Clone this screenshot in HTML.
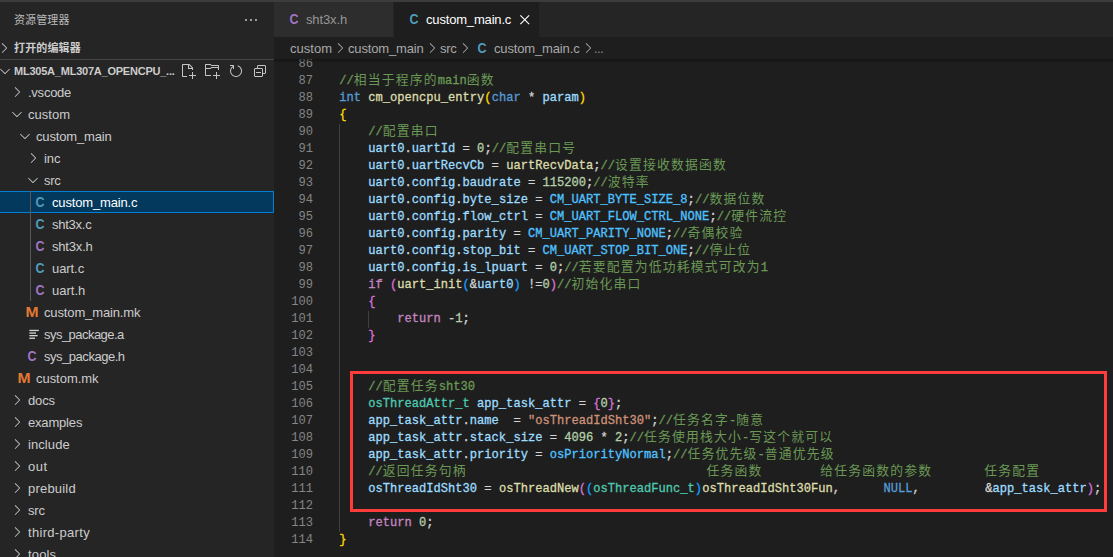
<!DOCTYPE html>
<html lang="zh-CN"><head><meta charset="utf-8"><title>custom_main.c</title>
<style>
html,body{margin:0;padding:0;background:#1e1e1e;overflow:hidden}
body{width:1113px;height:557px;position:relative;font-family:"Liberation Sans","Noto Sans CJK SC",sans-serif;font-size:13px;color:#cccccc}
#topstrip{position:absolute;left:0;top:0;width:1113px;height:2px;background:#3c3c3c}
#side{position:absolute;left:0;top:0;width:274px;height:557px;background:#252526;overflow:hidden}
.t{position:absolute;white-space:nowrap;height:22px;line-height:22px}
.ttl{font-size:11px;height:22px;color:#bbbbbb}
.hdr{font-size:11px;font-weight:bold;color:#cccccc}
.ic{position:absolute;display:block}
#sep{position:absolute;left:0;top:59px;width:274px;height:1px;background:#464647}
#sel{position:absolute;left:-1px;top:191px;width:275px;height:22px;background:#04395e;box-sizing:border-box;border:1px solid #007fd4}
#guide{position:absolute;left:30px;top:191px;width:1px;height:110px;background:#585858}
.fi{position:absolute;width:16px;height:22px;line-height:22px;text-align:center;font-weight:bold;white-space:nowrap}
.fc{font-size:14.5px;transform:scaleX(.86)}
.fm{font-size:14px;width:22px;transform:scaleX(1.12)}
#tabs{position:absolute;left:274px;top:2px;width:839px;height:35px;background:#252526}
#tab1{position:absolute;left:274px;top:2px;width:119px;height:35px;background:#2d2d2d}
#tab2{position:absolute;left:394px;top:2px;width:145px;height:35px;background:#1e1e1e}
#ed{position:absolute;left:274px;top:59px;width:839px;height:498px;overflow:hidden;background:#1e1e1e}
#ed > *{margin-left:-274px;margin-top:-59px}
.ln{position:absolute;left:273px;width:40px;text-align:right;color:#858585;height:17px;line-height:17px;font-family:"Liberation Mono",monospace;font-size:12.1px;letter-spacing:0.0px;white-space:pre}
.cl{position:absolute;left:339.2px;height:17px;line-height:17px;font-family:"Liberation Mono","Noto Sans CJK SC",monospace;font-size:12.1px;letter-spacing:0.0px;white-space:pre;color:#d4d4d4;-webkit-text-stroke:.3px}
.z{font-family:"Noto Sans CJK SC",sans-serif;font-size:12.8px;letter-spacing:1.1999999999999993px;line-height:1px;-webkit-text-stroke:0}
#ig1{position:absolute;left:339px;top:124px;width:1px;height:408px;background:#404040}
#ig2{position:absolute;left:368px;top:311px;width:1px;height:17px;background:#404040}
#red{position:absolute;left:350px;top:371px;width:757px;height:141px;box-sizing:border-box;border:3px solid #ff3b3b}
#shadow{position:absolute;left:274px;top:59px;width:839px;height:4px;background:linear-gradient(rgba(0,0,0,.34),rgba(0,0,0,0))}
</style></head>
<body>
<div id="side">
<div id="t_title" class="t ttl" style="left:14px;top:9px;letter-spacing:0.100px;">资源管理器</div>
<svg class="ic" style="left:243px;top:11.5px" width="16" height="16" viewBox="0 0 16 16" fill="#c5c5c5"><path d="M4 8a1 1 0 1 1-2 0 1 1 0 0 1 2 0zm5 0a1 1 0 1 1-2 0 1 1 0 0 1 2 0zm5 0a1 1 0 1 1-2 0 1 1 0 0 1 2 0z"/></svg>
<svg class="ic" style="left:-4px;top:40px" width="16" height="16" viewBox="0 0 16 16" fill="#c5c5c5"><path fill-rule="evenodd" clip-rule="evenodd" d="M10.072 8.024L5.715 3.667l.618-.62L11 7.716v.618L6.333 13l-.618-.619 4.357-4.357z"/></svg>
<div id="t_open" class="t hdr" style="left:14px;top:37px;letter-spacing:0.131px;">打开的编辑器</div>
<div id="sep"></div>
<svg class="ic" style="left:-3.5px;top:62.5px" width="16" height="16" viewBox="0 0 16 16" fill="#c5c5c5"><path fill-rule="evenodd" clip-rule="evenodd" d="M7.976 10.072l4.357-4.357.62.618L8.284 11h-.618L3 6.333l.619-.618 4.357 4.357z"/></svg>
<div id="t_proj" class="t hdr" style="left:14px;top:60px;letter-spacing:-0.227px;">ML305A_ML307A_OPENCPU_...</div>
<svg class="ic" style="left:180px;top:63px" width="16" height="16" viewBox="0 0 16 16" fill="#c5c5c5"><path fill-rule="evenodd" clip-rule="evenodd" d="M9.5 1.1l3.4 3.5.1.4v2h-1V6H8V2H3v11h4v1H2.5l-.5-.5v-12l.5-.5h6.7l.3.1zM9 2v3h2.9L9 2zm4 14h-1v-3H9v-1h3V9h1v3h3v1h-3v3z"/></svg>
<svg class="ic" style="left:204px;top:63px" width="16" height="16" viewBox="0 0 16 16" fill="#c5c5c5"><path fill-rule="evenodd" clip-rule="evenodd" d="M14.5 2H7.71l-.85-.85L6.51 1h-5l-.5.5v11l.5.5H7v-1H1.99V6h4.49l.35-.15.86-.86H14v1.5l-.001.51h1.011V2.5L14.5 2zm-.51 2h-6.5l-.35.15-.86.86H2v-3h4.29l.85.85.36.15H14l-.01.99zM13 16h-1v-3H9v-1h3V9h1v3h3v1h-3v3z"/></svg>
<svg class="ic" style="left:228px;top:63px" width="16" height="16" viewBox="0 0 16 16" fill="#c5c5c5"><path fill-rule="evenodd" clip-rule="evenodd" d="M4.681 3H2V2h3.5l.5.5V6H5V4a5 5 0 1 0 4.53-.761l.302-.954A6 6 0 1 1 4.681 3z"/></svg>
<svg class="ic" style="left:252px;top:63px" width="16" height="16" viewBox="0 0 16 16" fill="#c5c5c5"><path d="M9 9H4v1h5V9z"/><path fill-rule="evenodd" clip-rule="evenodd" d="M5 3l1-1h7l1 1v7l-1 1h-2v2l-1 1H3l-1-1V6l1-1h2V3zm1 2h4l1 1v4h2V3H6v2zm4 1H3v7h7V6z"/></svg>
<div id="sel"></div>
<div id="guide"></div>
<svg class="ic" style="left:9px;top:84px" width="16" height="16" viewBox="0 0 16 16" fill="#c5c5c5"><path fill-rule="evenodd" clip-rule="evenodd" d="M10.072 8.024L5.715 3.667l.618-.62L11 7.716v.618L6.333 13l-.618-.619 4.357-4.357z"/></svg>
<div id="r0" class="t row" style="left:28px;top:82px;letter-spacing:-0.244px;">.vscode</div>
<svg class="ic" style="left:9px;top:106px" width="16" height="16" viewBox="0 0 16 16" fill="#c5c5c5"><path fill-rule="evenodd" clip-rule="evenodd" d="M7.976 10.072l4.357-4.357.62.618L8.284 11h-.618L3 6.333l.619-.618 4.357 4.357z"/></svg>
<div id="r1" class="t row" style="left:28px;top:104px;letter-spacing:0.033px;">custom</div>
<svg class="ic" style="left:17px;top:128px" width="16" height="16" viewBox="0 0 16 16" fill="#c5c5c5"><path fill-rule="evenodd" clip-rule="evenodd" d="M7.976 10.072l4.357-4.357.62.618L8.284 11h-.618L3 6.333l.619-.618 4.357 4.357z"/></svg>
<div id="r2" class="t row" style="left:36px;top:126px;letter-spacing:-0.165px;">custom_main</div>
<svg class="ic" style="left:25px;top:150px" width="16" height="16" viewBox="0 0 16 16" fill="#c5c5c5"><path fill-rule="evenodd" clip-rule="evenodd" d="M10.072 8.024L5.715 3.667l.618-.62L11 7.716v.618L6.333 13l-.618-.619 4.357-4.357z"/></svg>
<div id="r3" class="t row" style="left:44px;top:148px;letter-spacing:-0.042px;">inc</div>
<svg class="ic" style="left:25px;top:172px" width="16" height="16" viewBox="0 0 16 16" fill="#c5c5c5"><path fill-rule="evenodd" clip-rule="evenodd" d="M7.976 10.072l4.357-4.357.62.618L8.284 11h-.618L3 6.333l.619-.618 4.357 4.357z"/></svg>
<div id="r4" class="t row" style="left:44px;top:170px;letter-spacing:-0.281px;">src</div>
<div class="fi fc" style="left:32px;top:191px;color:#519aba">C</div>
<div id="r5" class="t row" style="left:52px;top:192px;letter-spacing:-0.156px;color:#ffffff;">custom_main.c</div>
<div class="fi fc" style="left:32px;top:213px;color:#519aba">C</div>
<div id="r6" class="t row" style="left:52px;top:214px;letter-spacing:-0.256px;">sht3x.c</div>
<div class="fi fc" style="left:32px;top:235px;color:#a074c4">C</div>
<div id="r7" class="t row" style="left:52px;top:236px;letter-spacing:-0.188px;">sht3x.h</div>
<div class="fi fc" style="left:32px;top:257px;color:#519aba">C</div>
<div id="r8" class="t row" style="left:52px;top:258px;letter-spacing:-0.071px;">uart.c</div>
<div class="fi fc" style="left:32px;top:279px;color:#a074c4">C</div>
<div id="r9" class="t row" style="left:52px;top:280px;letter-spacing:0.009px;">uart.h</div>
<div class="fi fm" style="left:21px;top:301px;color:#e37933">M</div>
<div id="r10" class="t row" style="left:44px;top:302px;letter-spacing:-0.132px;">custom_main.mk</div>
<svg class="ic" style="left:27px;top:325px" width="16" height="16" viewBox="0 0 16 16" fill="#d4d7d6"><rect x="2.4" y="4.8" width="9.4" height="1.3"/><rect x="2.4" y="7.4" width="6.6" height="1.3"/><rect x="2.4" y="10.0" width="8.2" height="1.3"/><rect x="2.4" y="12.6" width="5.6" height="1.3"/></svg>
<div id="r11" class="t row" style="left:44px;top:324px;letter-spacing:-0.533px;">sys_package.a</div>
<div class="fi fc" style="left:24px;top:345px;color:#a074c4">C</div>
<div id="r12" class="t row" style="left:44px;top:346px;letter-spacing:-0.472px;">sys_package.h</div>
<div class="fi fm" style="left:13px;top:367px;color:#e37933">M</div>
<div id="r13" class="t row" style="left:36px;top:368px;letter-spacing:-0.038px;">custom.mk</div>
<svg class="ic" style="left:9px;top:392px" width="16" height="16" viewBox="0 0 16 16" fill="#c5c5c5"><path fill-rule="evenodd" clip-rule="evenodd" d="M10.072 8.024L5.715 3.667l.618-.62L11 7.716v.618L6.333 13l-.618-.619 4.357-4.357z"/></svg>
<div id="r14" class="t row" style="left:28px;top:390px;letter-spacing:-0.117px;">docs</div>
<svg class="ic" style="left:9px;top:414px" width="16" height="16" viewBox="0 0 16 16" fill="#c5c5c5"><path fill-rule="evenodd" clip-rule="evenodd" d="M10.072 8.024L5.715 3.667l.618-.62L11 7.716v.618L6.333 13l-.618-.619 4.357-4.357z"/></svg>
<div id="r15" class="t row" style="left:28px;top:412px;letter-spacing:-0.180px;">examples</div>
<svg class="ic" style="left:9px;top:436px" width="16" height="16" viewBox="0 0 16 16" fill="#c5c5c5"><path fill-rule="evenodd" clip-rule="evenodd" d="M10.072 8.024L5.715 3.667l.618-.62L11 7.716v.618L6.333 13l-.618-.619 4.357-4.357z"/></svg>
<div id="r16" class="t row" style="left:28px;top:434px;letter-spacing:0.085px;">include</div>
<svg class="ic" style="left:9px;top:458px" width="16" height="16" viewBox="0 0 16 16" fill="#c5c5c5"><path fill-rule="evenodd" clip-rule="evenodd" d="M10.072 8.024L5.715 3.667l.618-.62L11 7.716v.618L6.333 13l-.618-.619 4.357-4.357z"/></svg>
<div id="r17" class="t row" style="left:28px;top:456px;letter-spacing:0.540px;">out</div>
<svg class="ic" style="left:9px;top:480px" width="16" height="16" viewBox="0 0 16 16" fill="#c5c5c5"><path fill-rule="evenodd" clip-rule="evenodd" d="M10.072 8.024L5.715 3.667l.618-.62L11 7.716v.618L6.333 13l-.618-.619 4.357-4.357z"/></svg>
<div id="r18" class="t row" style="left:28px;top:478px;letter-spacing:0.205px;">prebuild</div>
<svg class="ic" style="left:9px;top:502px" width="16" height="16" viewBox="0 0 16 16" fill="#c5c5c5"><path fill-rule="evenodd" clip-rule="evenodd" d="M10.072 8.024L5.715 3.667l.618-.62L11 7.716v.618L6.333 13l-.618-.619 4.357-4.357z"/></svg>
<div id="r19" class="t row" style="left:28px;top:500px;letter-spacing:-0.211px;">src</div>
<svg class="ic" style="left:9px;top:524px" width="16" height="16" viewBox="0 0 16 16" fill="#c5c5c5"><path fill-rule="evenodd" clip-rule="evenodd" d="M10.072 8.024L5.715 3.667l.618-.62L11 7.716v.618L6.333 13l-.618-.619 4.357-4.357z"/></svg>
<div id="r20" class="t row" style="left:28px;top:522px;letter-spacing:0.316px;">third-party</div>
<svg class="ic" style="left:9px;top:546px" width="16" height="16" viewBox="0 0 16 16" fill="#c5c5c5"><path fill-rule="evenodd" clip-rule="evenodd" d="M10.072 8.024L5.715 3.667l.618-.62L11 7.716v.618L6.333 13l-.618-.619 4.357-4.357z"/></svg>
<div id="r21" class="t row" style="left:28px;top:544px;letter-spacing:0.145px;">tools</div>
</div>
<div id="tabs"></div>
<div id="tab1"></div><div id="tab2"></div>
<div class="fi fc" style="left:286px;top:8px;color:#a074c4">C</div>
<div id="t_tab1" class="t row" style="left:306px;top:9px;letter-spacing:-0.132px;color:#969696;">sht3x.h</div>
<div class="fi fc" style="left:406px;top:8px;color:#519aba">C</div>
<div id="t_tab2" class="t row" style="left:426px;top:9px;letter-spacing:-0.171px;color:#ffffff;">custom_main.c</div>
<svg class="ic" style="left:516.2px;top:11px" width="17.5" height="17.5" viewBox="0 0 16 16" fill="#ffffff"><path fill-rule="evenodd" clip-rule="evenodd" d="M8 8.707l3.646 3.647.708-.707L8.707 8l3.647-3.646-.707-.708L8 7.293 4.354 3.646l-.707.708L7.293 8l-3.647 3.646.708.708L8 8.707z"/></svg>
<div id="b1" class="t row" style="left:290px;top:38px;letter-spacing:0.033px;color:#a9a9a9;">custom</div>
<svg class="ic" style="left:332px;top:40px" width="16" height="16" viewBox="0 0 16 16" fill="#a9a9a9"><path fill-rule="evenodd" clip-rule="evenodd" d="M10.072 8.024L5.715 3.667l.618-.62L11 7.716v.618L6.333 13l-.618-.619 4.357-4.357z"/></svg>
<div id="b2" class="t row" style="left:348px;top:38px;letter-spacing:-0.147px;color:#a9a9a9;">custom_main</div>
<svg class="ic" style="left:424px;top:40px" width="16" height="16" viewBox="0 0 16 16" fill="#a9a9a9"><path fill-rule="evenodd" clip-rule="evenodd" d="M10.072 8.024L5.715 3.667l.618-.62L11 7.716v.618L6.333 13l-.618-.619 4.357-4.357z"/></svg>
<div id="b3" class="t row" style="left:440px;top:38px;letter-spacing:-0.312px;color:#a9a9a9;">src</div>
<svg class="ic" style="left:456.5px;top:40px" width="16" height="16" viewBox="0 0 16 16" fill="#a9a9a9"><path fill-rule="evenodd" clip-rule="evenodd" d="M10.072 8.024L5.715 3.667l.618-.62L11 7.716v.618L6.333 13l-.618-.619 4.357-4.357z"/></svg>
<div class="fi fc" style="left:474px;top:37px;color:#519aba">C</div>
<div id="b4" class="t row" style="left:494px;top:38px;letter-spacing:-0.148px;color:#a9a9a9;">custom_main.c</div>
<svg class="ic" style="left:579.5px;top:40px" width="16" height="16" viewBox="0 0 16 16" fill="#a9a9a9"><path fill-rule="evenodd" clip-rule="evenodd" d="M10.072 8.024L5.715 3.667l.618-.62L11 7.716v.618L6.333 13l-.618-.619 4.357-4.357z"/></svg>
<div id="b5" class="t row" style="left:594.2px;top:38px;color:#a9a9a9;transform:scaleX(.74);transform-origin:0 50%;">…</div>
<div id="ed">
<div id="ig1"></div><div id="ig2"></div>
<div class="ln" style="top:56px">86</div>
<div id="L86" class="cl" style="top:56px"></div>
<div class="ln" style="top:73px">87</div>
<div id="L87" class="cl" style="top:73px"><span style="color:#6a9955">//<span class="z">相当于程序的</span>main<span class="z">函数</span></span></div>
<div class="ln" style="top:90px">88</div>
<div id="L88" class="cl" style="top:90px"><span style="color:#569cd6">int</span><span style="color:#d4d4d4"> </span><span style="color:#dcdcaa">cm_opencpu_entry</span><span style="color:#ffd700">(</span><span style="color:#569cd6">char</span><span style="color:#d4d4d4"> * </span><span style="color:#9cdcfe">param</span><span style="color:#ffd700">)</span></div>
<div class="ln" style="top:107px">89</div>
<div id="L89" class="cl" style="top:107px"><span style="color:#ffd700">{</span></div>
<div class="ln" style="top:124px">90</div>
<div id="L90" class="cl" style="top:124px"><span style="color:#d4d4d4">    </span><span style="color:#6a9955">//<span class="z">配置串口</span></span></div>
<div class="ln" style="top:141px">91</div>
<div id="L91" class="cl" style="top:141px"><span style="color:#d4d4d4">    </span><span style="color:#9cdcfe">uart0</span><span style="color:#d4d4d4">.</span><span style="color:#9cdcfe">uartId</span><span style="color:#d4d4d4"> = </span><span style="color:#b5cea8">0</span><span style="color:#d4d4d4">;</span><span style="color:#6a9955">//<span class="z">配置串口号</span></span></div>
<div class="ln" style="top:158px">92</div>
<div id="L92" class="cl" style="top:158px"><span style="color:#d4d4d4">    </span><span style="color:#9cdcfe">uart0</span><span style="color:#d4d4d4">.</span><span style="color:#9cdcfe">uartRecvCb</span><span style="color:#d4d4d4"> = </span><span style="color:#dcdcaa">uartRecvData</span><span style="color:#d4d4d4">;</span><span style="color:#6a9955">//<span class="z">设置接收数据函数</span></span></div>
<div class="ln" style="top:175px">93</div>
<div id="L93" class="cl" style="top:175px"><span style="color:#d4d4d4">    </span><span style="color:#9cdcfe">uart0</span><span style="color:#d4d4d4">.</span><span style="color:#9cdcfe">config</span><span style="color:#d4d4d4">.</span><span style="color:#9cdcfe">baudrate</span><span style="color:#d4d4d4"> = </span><span style="color:#b5cea8">115200</span><span style="color:#d4d4d4">;</span><span style="color:#6a9955">//<span class="z">波特率</span></span></div>
<div class="ln" style="top:192px">94</div>
<div id="L94" class="cl" style="top:192px"><span style="color:#d4d4d4">    </span><span style="color:#9cdcfe">uart0</span><span style="color:#d4d4d4">.</span><span style="color:#9cdcfe">config</span><span style="color:#d4d4d4">.</span><span style="color:#9cdcfe">byte_size</span><span style="color:#d4d4d4"> = </span><span style="color:#4fc1ff">CM_UART_BYTE_SIZE_8</span><span style="color:#d4d4d4">;</span><span style="color:#6a9955">//<span class="z">数据位数</span></span></div>
<div class="ln" style="top:209px">95</div>
<div id="L95" class="cl" style="top:209px"><span style="color:#d4d4d4">    </span><span style="color:#9cdcfe">uart0</span><span style="color:#d4d4d4">.</span><span style="color:#9cdcfe">config</span><span style="color:#d4d4d4">.</span><span style="color:#9cdcfe">flow_ctrl</span><span style="color:#d4d4d4"> = </span><span style="color:#4fc1ff">CM_UART_FLOW_CTRL_NONE</span><span style="color:#d4d4d4">;</span><span style="color:#6a9955">//<span class="z">硬件流控</span></span></div>
<div class="ln" style="top:226px">96</div>
<div id="L96" class="cl" style="top:226px"><span style="color:#d4d4d4">    </span><span style="color:#9cdcfe">uart0</span><span style="color:#d4d4d4">.</span><span style="color:#9cdcfe">config</span><span style="color:#d4d4d4">.</span><span style="color:#9cdcfe">parity</span><span style="color:#d4d4d4"> = </span><span style="color:#4fc1ff">CM_UART_PARITY_NONE</span><span style="color:#d4d4d4">;</span><span style="color:#6a9955">//<span class="z">奇偶校验</span></span></div>
<div class="ln" style="top:243px">97</div>
<div id="L97" class="cl" style="top:243px"><span style="color:#d4d4d4">    </span><span style="color:#9cdcfe">uart0</span><span style="color:#d4d4d4">.</span><span style="color:#9cdcfe">config</span><span style="color:#d4d4d4">.</span><span style="color:#9cdcfe">stop_bit</span><span style="color:#d4d4d4"> = </span><span style="color:#4fc1ff">CM_UART_STOP_BIT_ONE</span><span style="color:#d4d4d4">;</span><span style="color:#6a9955">//<span class="z">停止位</span></span></div>
<div class="ln" style="top:260px">98</div>
<div id="L98" class="cl" style="top:260px"><span style="color:#d4d4d4">    </span><span style="color:#9cdcfe">uart0</span><span style="color:#d4d4d4">.</span><span style="color:#9cdcfe">config</span><span style="color:#d4d4d4">.</span><span style="color:#9cdcfe">is_lpuart</span><span style="color:#d4d4d4"> = </span><span style="color:#b5cea8">0</span><span style="color:#d4d4d4">;</span><span style="color:#6a9955">//<span class="z">若要配置为低功耗模式可改为</span>1</span></div>
<div class="ln" style="top:277px">99</div>
<div id="L99" class="cl" style="top:277px"><span style="color:#d4d4d4">    </span><span style="color:#c586c0">if</span><span style="color:#d4d4d4"> </span><span style="color:#da70d6">(</span><span style="color:#dcdcaa">uart_init</span><span style="color:#179fff">(</span><span style="color:#d4d4d4">&amp;</span><span style="color:#9cdcfe">uart0</span><span style="color:#179fff">)</span><span style="color:#d4d4d4"> !=</span><span style="color:#b5cea8">0</span><span style="color:#da70d6">)</span><span style="color:#6a9955">//<span class="z">初始化串口</span></span></div>
<div class="ln" style="top:294px">100</div>
<div id="L100" class="cl" style="top:294px"><span style="color:#d4d4d4">    </span><span style="color:#da70d6">{</span></div>
<div class="ln" style="top:311px">101</div>
<div id="L101" class="cl" style="top:311px"><span style="color:#d4d4d4">        </span><span style="color:#c586c0">return</span><span style="color:#d4d4d4"> -</span><span style="color:#b5cea8">1</span><span style="color:#d4d4d4">;</span></div>
<div class="ln" style="top:328px">102</div>
<div id="L102" class="cl" style="top:328px"><span style="color:#d4d4d4">    </span><span style="color:#da70d6">}</span></div>
<div class="ln" style="top:345px">103</div>
<div id="L103" class="cl" style="top:345px"></div>
<div class="ln" style="top:362px">104</div>
<div id="L104" class="cl" style="top:362px"></div>
<div class="ln" style="top:379px">105</div>
<div id="L105" class="cl" style="top:379px"><span style="color:#d4d4d4">    </span><span style="color:#6a9955">//<span class="z">配置任务</span>sht30</span></div>
<div class="ln" style="top:396px">106</div>
<div id="L106" class="cl" style="top:396px"><span style="color:#d4d4d4">    </span><span style="color:#4ec9b0">osThreadAttr_t</span><span style="color:#d4d4d4"> </span><span style="color:#9cdcfe">app_task_attr</span><span style="color:#d4d4d4"> = </span><span style="color:#da70d6">{</span><span style="color:#b5cea8">0</span><span style="color:#da70d6">}</span><span style="color:#d4d4d4">;</span></div>
<div class="ln" style="top:413px">107</div>
<div id="L107" class="cl" style="top:413px"><span style="color:#d4d4d4">    </span><span style="color:#9cdcfe">app_task_attr</span><span style="color:#d4d4d4">.</span><span style="color:#9cdcfe">name</span><span style="color:#d4d4d4">  = </span><span style="color:#ce9178">"osThreadIdSht30"</span><span style="color:#d4d4d4">;</span><span style="color:#6a9955">//<span class="z">任务名字</span>-<span class="z">随意</span></span></div>
<div class="ln" style="top:430px">108</div>
<div id="L108" class="cl" style="top:430px"><span style="color:#d4d4d4">    </span><span style="color:#9cdcfe">app_task_attr</span><span style="color:#d4d4d4">.</span><span style="color:#9cdcfe">stack_size</span><span style="color:#d4d4d4"> = </span><span style="color:#b5cea8">4096</span><span style="color:#d4d4d4"> * </span><span style="color:#b5cea8">2</span><span style="color:#d4d4d4">;</span><span style="color:#6a9955">//<span class="z">任务使用栈大小</span>-<span class="z">写这个就可以</span></span></div>
<div class="ln" style="top:447px">109</div>
<div id="L109" class="cl" style="top:447px"><span style="color:#d4d4d4">    </span><span style="color:#9cdcfe">app_task_attr</span><span style="color:#d4d4d4">.</span><span style="color:#9cdcfe">priority</span><span style="color:#d4d4d4"> = </span><span style="color:#4fc1ff">osPriorityNormal</span><span style="color:#d4d4d4">;</span><span style="color:#6a9955">//<span class="z">任务优先级</span>-<span class="z">普通优先级</span></span></div>
<div class="ln" style="top:464px">110</div>
<div id="L110" class="cl" style="top:464px"><span style="color:#d4d4d4">    </span><span style="color:#6a9955">//<span class="z">返回任务句柄</span></span><span style="color:#d4d4d4"></span></div>
<div class="cl" style="top:464px;left:706.5px"><span style="color:#6a9955"><span class="z">任务函数</span></span></div>
<div class="cl" style="top:464px;left:820.2px"><span style="color:#6a9955"><span class="z">给任务函数的参数</span></span></div>
<div class="cl" style="top:464px;left:984.3px"><span style="color:#6a9955"><span class="z">任务配置</span></span></div>
<div class="ln" style="top:481px">111</div>
<div id="L111" class="cl" style="top:481px"><span style="color:#d4d4d4">    </span><span style="color:#9cdcfe">osThreadIdSht30</span><span style="color:#d4d4d4"> = </span><span style="color:#dcdcaa">osThreadNew</span><span style="color:#da70d6">(</span><span style="color:#179fff">(</span><span style="color:#4ec9b0">osThreadFunc_t</span><span style="color:#179fff">)</span><span style="color:#dcdcaa">osThreadIdSht30Fun</span><span style="color:#d4d4d4">,</span><span style="color:#d4d4d4">      </span><span style="color:#569cd6">NULL</span><span style="color:#d4d4d4">,</span><span style="color:#d4d4d4">         </span><span style="color:#d4d4d4">&amp;</span><span style="color:#9cdcfe">app_task_attr</span><span style="color:#da70d6">)</span><span style="color:#d4d4d4">;</span></div>
<div class="ln" style="top:498px">112</div>
<div id="L112" class="cl" style="top:498px"></div>
<div class="ln" style="top:515px">113</div>
<div id="L113" class="cl" style="top:515px"><span style="color:#d4d4d4">    </span><span style="color:#c586c0">return</span><span style="color:#d4d4d4"> </span><span style="color:#b5cea8">0</span><span style="color:#d4d4d4">;</span></div>
<div class="ln" style="top:532px">114</div>
<div id="L114" class="cl" style="top:532px"><span style="color:#ffd700">}</span></div>
<div id="red"></div>
</div>
<div id="shadow"></div>
<div id="topstrip"></div>
</body></html>
